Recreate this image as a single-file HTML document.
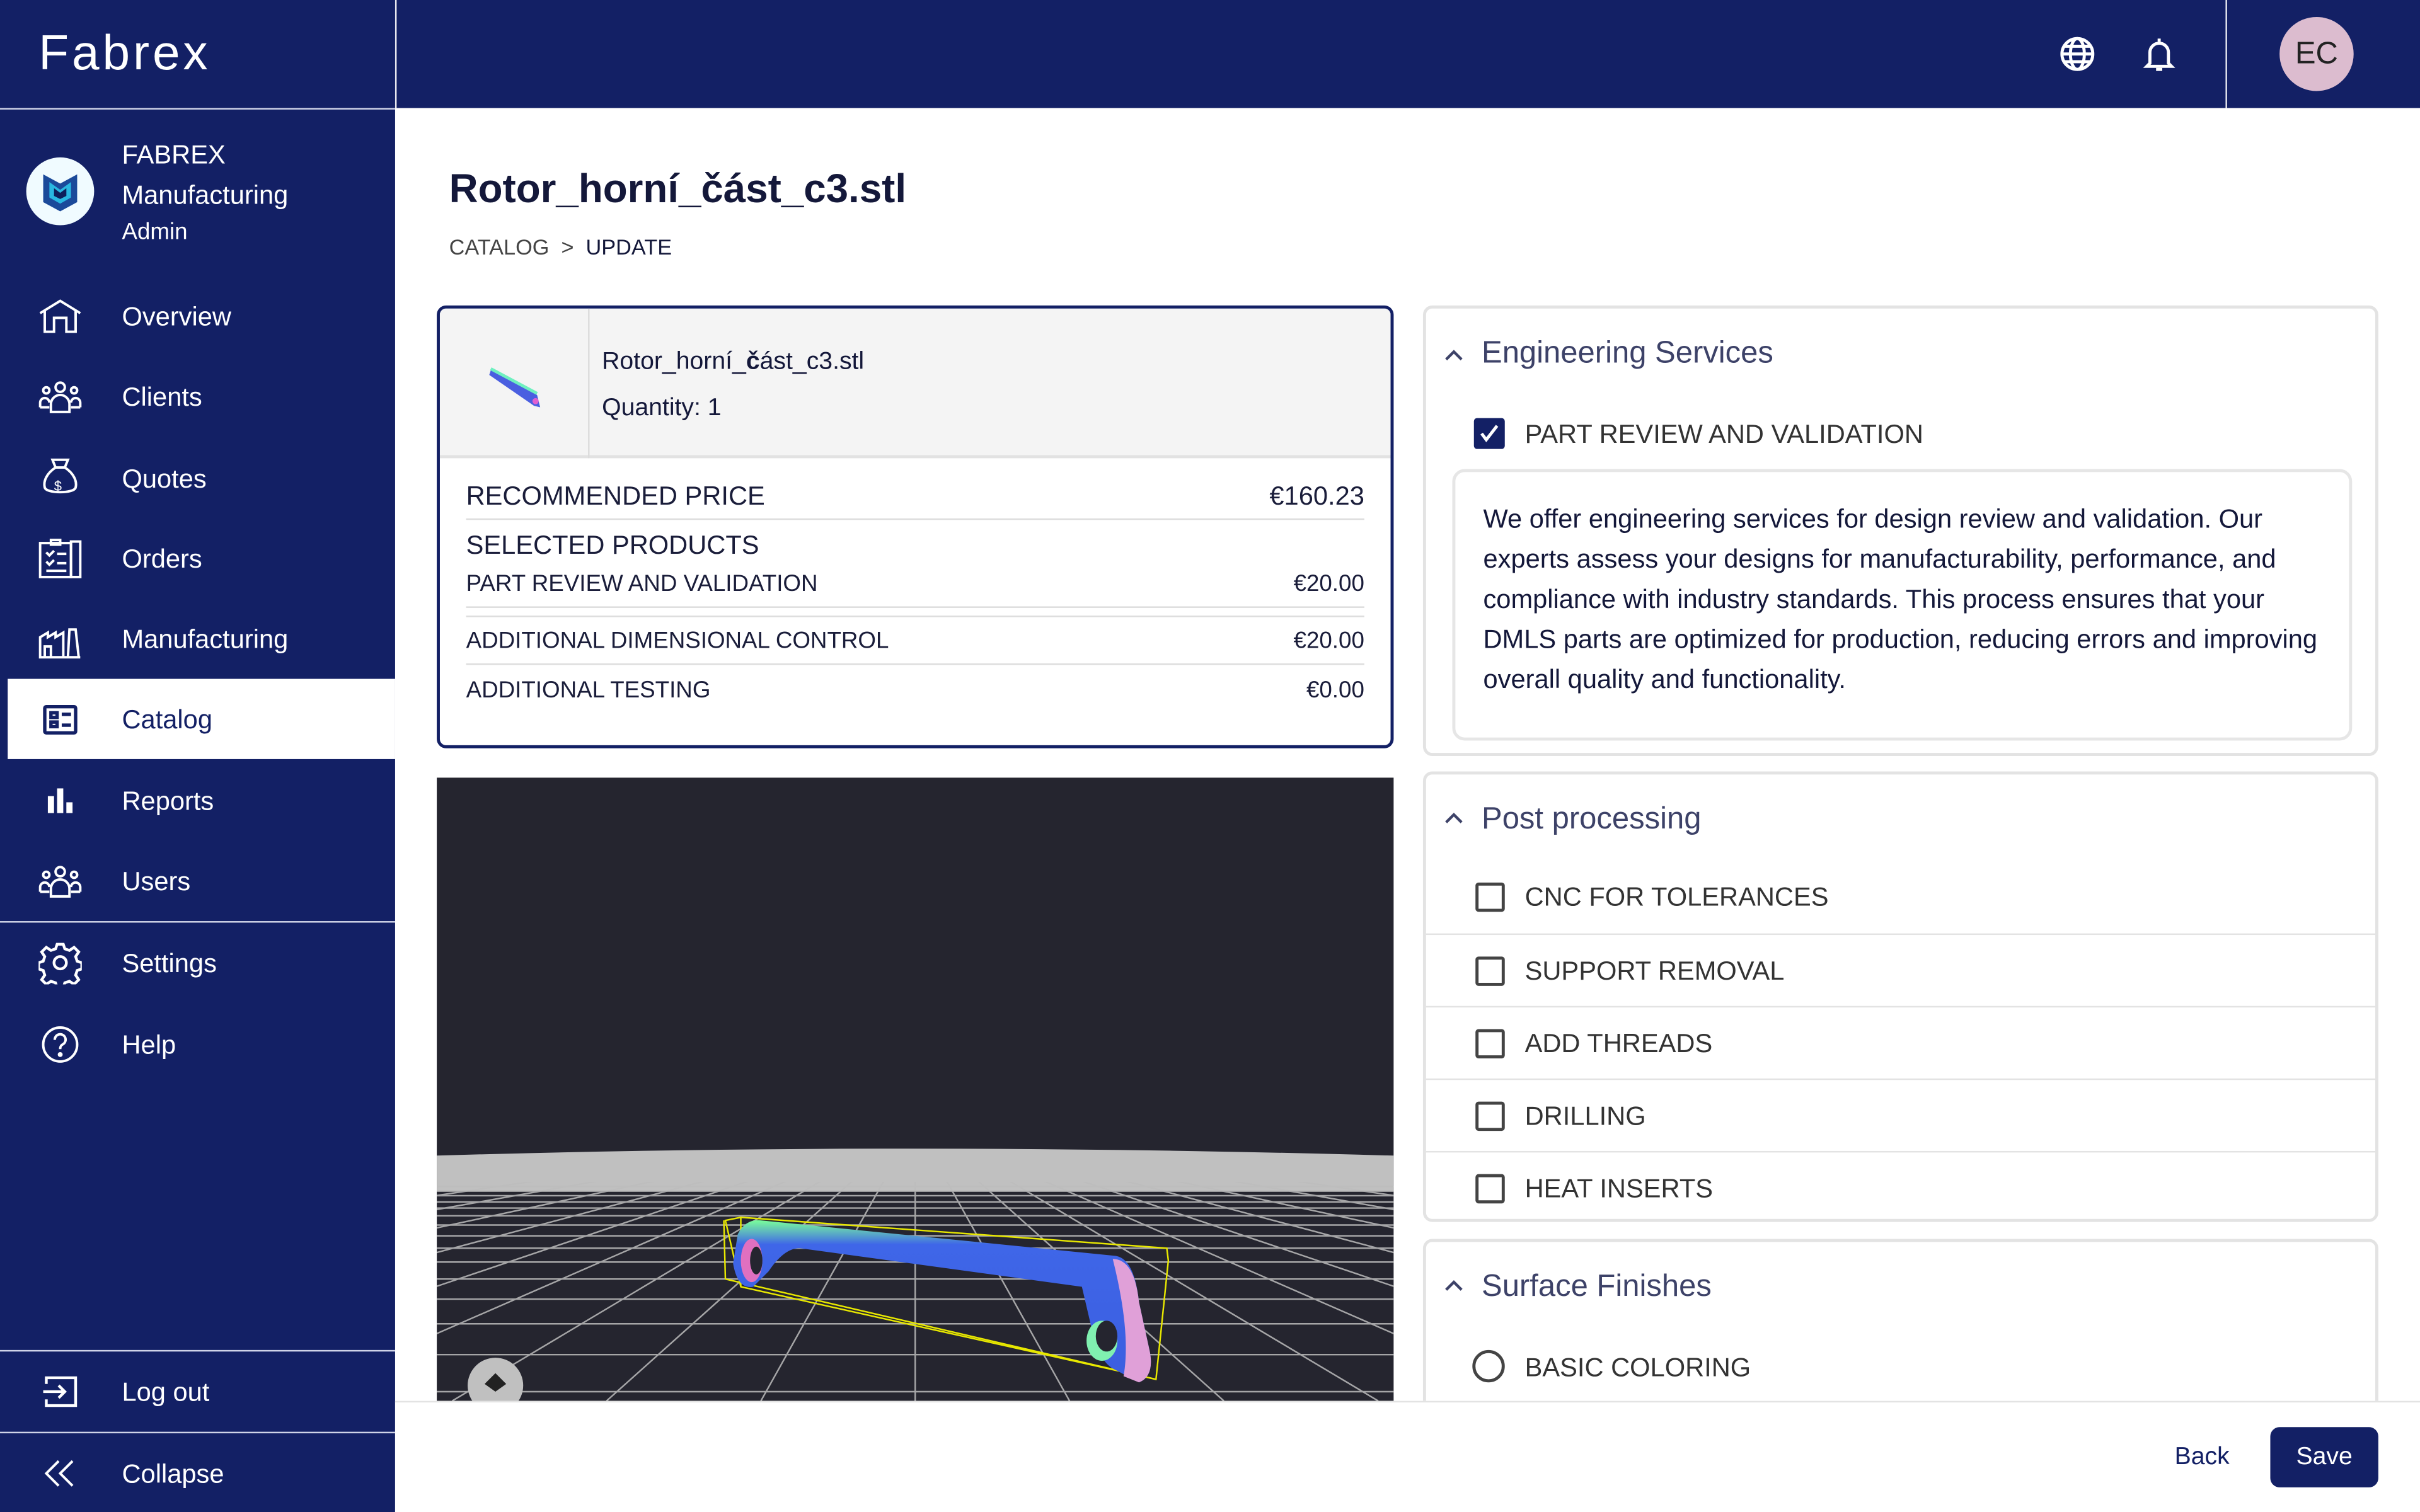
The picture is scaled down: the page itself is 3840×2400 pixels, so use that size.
<!DOCTYPE html>
<html><head><meta charset="utf-8"><style>
*{box-sizing:border-box;margin:0;padding:0}
html,body{width:3840px;height:2400px;overflow:hidden;background:#fff}
#r{position:absolute;left:0;top:0;width:1568px;height:980px;transform:scale(2.44898);transform-origin:0 0;font-family:"Liberation Sans","Noto Sans CJK SC",sans-serif;color:#1a1d3a}
.a{position:absolute}
.nav{color:#fff;font-size:17px}
.ic{position:absolute;left:25px;width:28px;height:28px}
.row{position:absolute;left:302px;right:19px;font-size:15px;color:#1a1d3a}
.row span.v{position:absolute;right:0}
.pan{position:absolute;left:922px;width:619px;border:2px solid #e3e3e3;border-radius:6px;background:#fff}
.ph{position:absolute;left:36px;font-size:20px;color:#3d4268}
.chev{position:absolute;left:12px;width:12px;height:8px}
.opt{position:absolute;left:0;right:0;height:47px;border-top:1px solid #e3e3e3}
.cb{position:absolute;left:32px;width:19px;height:19px;border:2px solid #444;border-radius:2px}
.ol{position:absolute;left:64px;font-size:17px;color:#333}
</style></head><body><div id="r">
<div class="a" style="left:0;top:0;width:1568px;height:70px;background:#132065"></div>
<div class="a" style="left:256px;top:0;width:1px;height:70px;background:#e8e8f0"></div>
<div class="a" style="left:1442px;top:0;width:1px;height:70px;background:#e8e8f0"></div>
<div class="a" style="left:25px;top:16px;color:#fff;font-size:32px;letter-spacing:2px">Fabrex</div>
<svg class="a" style="left:1334px;top:23px" width="24" height="24" viewBox="0 0 24 24" fill="none" stroke="#fff" stroke-width="2"><circle cx="12" cy="12" r="10"/><ellipse cx="12" cy="12" rx="4.5" ry="10"/><path d="M2 12h20M3.5 7h17M3.5 17h17"/></svg>
<svg class="a" style="left:1388px;top:23px" width="22" height="24" viewBox="0 0 22 24" fill="none" stroke="#fff" stroke-width="2"><path d="M11 2v2M5 18V11a6 6 0 0 1 12 0v7l2 2H3z"/><path d="M9 22h4"/></svg>
<div class="a" style="left:1477px;top:11px;width:48px;height:48px;border-radius:50%;background:#dcbccf;color:#222;font-size:20px;text-align:center;line-height:48px">EC</div>
<div class="a" style="left:0;top:70px;width:256px;height:910px;background:#132065"></div>
<div class="a" style="left:0;top:70px;width:256px;height:1px;background:#d0d4e8"></div>
<div class="a" style="left:17px;top:102px;width:44px;height:44px;border-radius:50%;background:#f0fbff"></div>
<svg class="a" style="left:26px;top:110px" width="26" height="28" viewBox="0 0 26 28"><path d="M2 3l11 6 11-6v18l-11 6-11-6z" fill="#1b4a9a"/><path d="M6 8l7 5 7-5v10l-7 4-7-4z" fill="#29b7e0"/><path d="M9 12l4 3 4-3v5l-4 2-4-2z" fill="#0d1f5a"/></svg>
<div class="a nav" style="left:79px;top:91px">FABREX</div>
<div class="a nav" style="left:79px;top:117px">Manufacturing</div>
<div class="a nav" style="left:79px;top:142px;font-size:15px">Admin</div>
<div class="a" style="left:5px;top:440px;width:251px;height:52px;background:#fff"></div>
<div class="a nav" style="left:79px;top:196px">Overview</div>
<div class="a nav" style="left:79px;top:248px">Clients</div>
<div class="a nav" style="left:79px;top:301px">Quotes</div>
<div class="a nav" style="left:79px;top:353px">Orders</div>
<div class="a nav" style="left:79px;top:405px">Manufacturing</div>
<div class="a nav" style="left:79px;top:457px;color:#132065">Catalog</div>
<div class="a nav" style="left:79px;top:510px">Reports</div>
<div class="a nav" style="left:79px;top:562px">Users</div>
<div class="a" style="left:0;top:597px;width:256px;height:1px;background:#d0d4e8"></div>
<div class="a nav" style="left:79px;top:615px">Settings</div>
<div class="a nav" style="left:79px;top:668px">Help</div>
<div class="a" style="left:0;top:875px;width:256px;height:1px;background:#d0d4e8"></div>
<div class="a nav" style="left:79px;top:893px">Log out</div>
<div class="a" style="left:0;top:928px;width:256px;height:1px;background:#d0d4e8"></div>
<div class="a nav" style="left:79px;top:946px">Collapse</div>
<svg class="ic" style="top:191px" viewBox="0 0 28 28" fill="none" stroke="#fff" stroke-width="1.6"><path d="M1 12L14 4l13 8M4 10v14h6v-9h8v9h6V10"/></svg>
<svg class="ic" style="top:243px" viewBox="0 0 28 28" fill="none" stroke="#fff" stroke-width="1.6"><circle cx="14" cy="8" r="3"/><circle cx="5" cy="10" r="2"/><circle cx="23" cy="10" r="2"/><path d="M8 24v-5a6 6 0 0 1 12 0v5zM1 21v-3a3 3 0 0 1 6 0M27 21v-3a3 3 0 0 0-6 0M1 21h6M21 21h6"/></svg>
<svg class="ic" style="top:296px" viewBox="0 0 28 28" fill="none" stroke="#fff" stroke-width="1.6"><path d="M9 2h10l-2 5h-6zM11 7c-6 4-8 9-7 13 1 4 19 4 20 0 1-4-1-9-7-13"/><text x="10" y="22" fill="#fff" stroke="none" font-size="9" font-family="Liberation Sans">$</text></svg>
<svg class="ic" style="top:348px" viewBox="0 0 28 28" fill="none" stroke="#fff" stroke-width="1.6"><rect x="1" y="4" width="20" height="22"/><rect x="21" y="3" width="6" height="23"/><path d="M5 10l2 2 3-3M12 11h6M5 16l2 2 3-3M12 17h6M5 22h13M8 2h6v3H8z"/></svg>
<svg class="ic" style="top:400px" viewBox="0 0 28 28" fill="none" stroke="#fff" stroke-width="1.6"><path d="M1 26V13l5-3v3l5-3v3l5-3v16zM19 26l1-18h4l2 18zM1 26h26M4 19h4v7H4z"/></svg>
<svg class="ic" style="top:452px" viewBox="0 0 28 28" fill="none" stroke="#132065" stroke-width="2.2"><rect x="4" y="6" width="20" height="17" rx="1"/><path d="M8 10h4v3H8zM8 16h4v3H8zM15 11h6M15 18h6"/></svg>
<svg class="ic" style="top:505px" viewBox="0 0 28 28" fill="#fff"><rect x="6" y="11" width="4" height="11"/><rect x="12" y="6" width="4" height="16"/><rect x="18" y="15" width="4" height="7"/></svg>
<svg class="ic" style="top:557px" viewBox="0 0 28 28" fill="none" stroke="#fff" stroke-width="1.6"><circle cx="14" cy="8" r="3"/><circle cx="5" cy="10" r="2"/><circle cx="23" cy="10" r="2"/><path d="M8 24v-5a6 6 0 0 1 12 0v5zM1 21v-3a3 3 0 0 1 6 0M27 21v-3a3 3 0 0 0-6 0M1 21h6M21 21h6"/></svg>
<svg class="ic" style="top:610px" viewBox="0 0 28 28" fill="none" stroke="#fff" stroke-width="1.8"><path d="M12 2h4l1 3 3 1 3-2 3 3-2 3 1 3 3 1v4l-3 1-1 3 2 3-3 3-3-2-3 1-1 3h-4l-1-3-3-1-3 2-3-3 2-3-1-3-3-1v-4l3-1 1-3-2-3 3-3 3 2 3-1z"/><circle cx="14" cy="14" r="4"/></svg>
<svg class="ic" style="top:663px" viewBox="0 0 28 28" fill="none" stroke="#fff" stroke-width="1.6"><circle cx="14" cy="14" r="11"/><path d="M10.5 11a3.5 3.5 0 1 1 5 3c-1 .6-1.5 1.3-1.5 3"/><circle cx="14" cy="20.5" r=".8" fill="#fff"/></svg>
<svg class="ic" style="top:888px" viewBox="0 0 28 28" fill="none" stroke="#fff" stroke-width="1.8"><path d="M5 9V5h19v18H5v-4M3 14h14M13 10l4 4-4 4"/></svg>
<svg class="ic" style="top:941px" viewBox="0 0 28 28" fill="none" stroke="#fff" stroke-width="1.6"><path d="M13 6L5 14l8 8M22 6l-8 8 8 8"/></svg>
<div class="a" style="left:291px;top:107px;font-size:26px;font-weight:bold;color:#14183a">Rotor_horní_část_c3.stl</div>
<div class="a" style="left:291px;top:152px;font-size:14px;color:#444">CATALOG &nbsp;&gt;&nbsp; <span style="color:#14183a">UPDATE</span></div>
<div class="a" style="left:283px;top:198px;width:620px;height:287px;border:2px solid #132065;border-radius:6px;overflow:hidden;background:#fff">
 <div class="a" style="left:0;top:0;right:0;height:97px;background:#f4f4f4;border-bottom:2px solid #e2e2e2"></div>
 <div class="a" style="left:96px;top:0;width:1px;height:97px;background:#dcdcdc"></div>
 <svg class="a" style="left:30px;top:34px" width="40" height="32" viewBox="0 0 40 32"><path d="M3 6l30 16 2 8-4-1L2 9z" fill="#4a5fe0"/><path d="M3 5l30 16" stroke="#6ff0c0" stroke-width="2"/><circle cx="32" cy="26" r="2" fill="#e060d0"/></svg>
 <div class="a" style="left:105px;top:26px;font-size:16px;color:#14183a">Rotor_horní_<b>č</b>ást_c3.stl</div>
 <div class="a" style="left:105px;top:56px;font-size:16px;color:#14183a">Quantity: 1</div>
</div>
<div class="row" style="top:312px;font-size:17px;left:302px;width:582px">RECOMMENDED PRICE<span class="v">€160.23</span></div>
<div class="a" style="left:302px;top:336px;width:582px;height:1px;background:#ddd"></div>
<div class="row" style="top:344px;font-size:17px;width:582px">SELECTED PRODUCTS</div>
<div class="row" style="top:370px;width:582px">PART REVIEW AND VALIDATION<span class="v">€20.00</span></div>
<div class="a" style="left:302px;top:393px;width:582px;height:1px;background:#ddd"></div>
<div class="a" style="left:302px;top:399px;width:582px;height:1px;background:#ddd"></div>
<div class="row" style="top:407px;width:582px">ADDITIONAL DIMENSIONAL CONTROL<span class="v">€20.00</span></div>
<div class="a" style="left:302px;top:430px;width:582px;height:1px;background:#ddd"></div>
<div class="row" style="top:439px;width:582px">ADDITIONAL TESTING<span class="v">€0.00</span></div>
<svg class="a" style="left:283px;top:504px" width="620" height="404" viewBox="0 0 620 404">
<defs><clipPath id="fl"><rect x="0" y="262" width="620" height="142"/></clipPath>
<linearGradient id="pg" x1="0" y1="0" x2="0" y2="1"><stop offset="0" stop-color="#7aff9a"/><stop offset=".15" stop-color="#3f66e8"/><stop offset="1" stop-color="#3b5ee0"/></linearGradient></defs>
<rect width="620" height="404" fill="#25252f"/>
<path d="M0 245Q300 236 620 245V268H0z" fill="#c0c0c0"/>
<g clip-path="url(#fl)" stroke="#bdbdbd" stroke-width="1" opacity=".85">
<path d="M0 265H620M0 268H620M0 271H620M0 275H620M0 279H620M0 284H620M0 290H620M0 297H620M0 305H620M0 314H620M0 325H620M0 338H620M0 354H620M0 374H620M0 398H620"/>
<path d="M310 225L-900 404M310 225L-700 404M310 225L-520 404M310 225L-360 404M310 225L-220 404M310 225L-100 404M310 225L10 404M310 225L110 404M310 225L210 404M310 225L310 404M310 225L410 404M310 225L510 404M310 225L610 404M310 225L720 404M310 225L840 404M310 225L980 404M310 225L1140 404M310 225L1320 404M310 225L1520 404"/>
</g>
<g stroke="#e8e800" stroke-width="1" fill="none"><path d="M187 287L197 285L473 305L474 313L466 390L197 330z"/><path d="M197 285L197 330M186 287L187 325M187 325L466 390"/></g>
<path d="M195 296Q200 286 210 287L440 310Q452 312 455 340L462 372Q465 388 455 392L440 384Q430 380 425 360L418 330L235 305Q225 305 215 320L205 330Q195 332 192 315z" fill="url(#pg)"/>
<path d="M438 312Q452 312 455 340L462 372Q465 388 455 392L445 388Q450 360 438 312z" fill="#e0a0d8"/>
<ellipse cx="204" cy="313" rx="7" ry="14" fill="#e070c0"/><ellipse cx="207" cy="313" rx="4" ry="9" fill="#25252f"/>
<ellipse cx="431" cy="365" rx="10" ry="13" fill="#80f0b0"/><ellipse cx="434" cy="362" rx="7" ry="10" fill="#25252f"/>
<circle cx="38" cy="394" r="18" fill="#c0c0c0"/><path d="M38 386l7 7-7 5-7-5z" fill="#222"/>
</svg>
<div class="pan" style="top:198px;height:292px">
 <svg class="chev" style="top:26px" viewBox="0 0 12 8" fill="none" stroke="#3d4268" stroke-width="1.8"><path d="M1 7l5-5 5 5"/></svg>
 <div class="ph" style="top:18px">Engineering Services</div>
 <div class="a" style="left:31px;top:71px;width:20px;height:20px;background:#132065;border-radius:2px"></div>
 <svg class="a" style="left:34px;top:74px" width="14" height="14" viewBox="0 0 14 14" fill="none" stroke="#fff" stroke-width="2"><path d="M2 7l3 4 7-9"/></svg>
 <div class="ol" style="top:72px;color:#333">PART REVIEW AND VALIDATION</div>
 <div class="a" style="left:17px;top:104px;width:583px;height:176px;border:2px solid #e6e6e6;border-radius:8px;padding:18px 18px;font-size:17px;line-height:26px;color:#14183a">We offer engineering services for design review and validation. Our experts assess your designs for manufacturability, performance, and compliance with industry standards. This process ensures that your DMLS parts are optimized for production, reducing errors and improving overall quality and functionality.</div>
</div>
<div class="pan" style="top:500px;height:292px">
 <svg class="chev" style="top:24px" viewBox="0 0 12 8" fill="none" stroke="#3d4268" stroke-width="1.8"><path d="M1 7l5-5 5 5"/></svg>
 <div class="ph" style="top:18px">Post processing</div>
 <div class="opt" style="top:56px;border-top:none"><div class="cb" style="top:14px"></div><div class="ol" style="top:14px">CNC FOR TOLERANCES</div></div>
 <div class="opt" style="top:103px"><div class="cb" style="top:14px"></div><div class="ol" style="top:14px">SUPPORT REMOVAL</div></div>
 <div class="opt" style="top:150px"><div class="cb" style="top:14px"></div><div class="ol" style="top:14px">ADD THREADS</div></div>
 <div class="opt" style="top:197px"><div class="cb" style="top:14px"></div><div class="ol" style="top:14px">DRILLING</div></div>
 <div class="opt" style="top:244px"><div class="cb" style="top:14px"></div><div class="ol" style="top:14px">HEAT INSERTS</div></div>
</div>
<div class="pan" style="top:803px;height:140px">
 <svg class="chev" style="top:24px" viewBox="0 0 12 8" fill="none" stroke="#3d4268" stroke-width="1.8"><path d="M1 7l5-5 5 5"/></svg>
 <div class="ph" style="top:18px">Surface Finishes</div>
 <div class="a" style="left:30px;top:70px;width:21px;height:21px;border:2px solid #444;border-radius:50%"></div>
 <div class="ol" style="top:72px">BASIC COLORING</div>
</div>
<div class="a" style="left:256px;top:908px;width:1312px;height:72px;background:#fff;border-top:1px solid #e3e3e3"></div>
<div class="a" style="left:1409px;top:936px;font-size:16px;color:#132065">Back</div>
<div class="a" style="left:1471px;top:925px;width:70px;height:39px;background:#132065;border-radius:6px;color:#fff;font-size:16px;text-align:center;line-height:39px">Save</div>
</div></body></html>
